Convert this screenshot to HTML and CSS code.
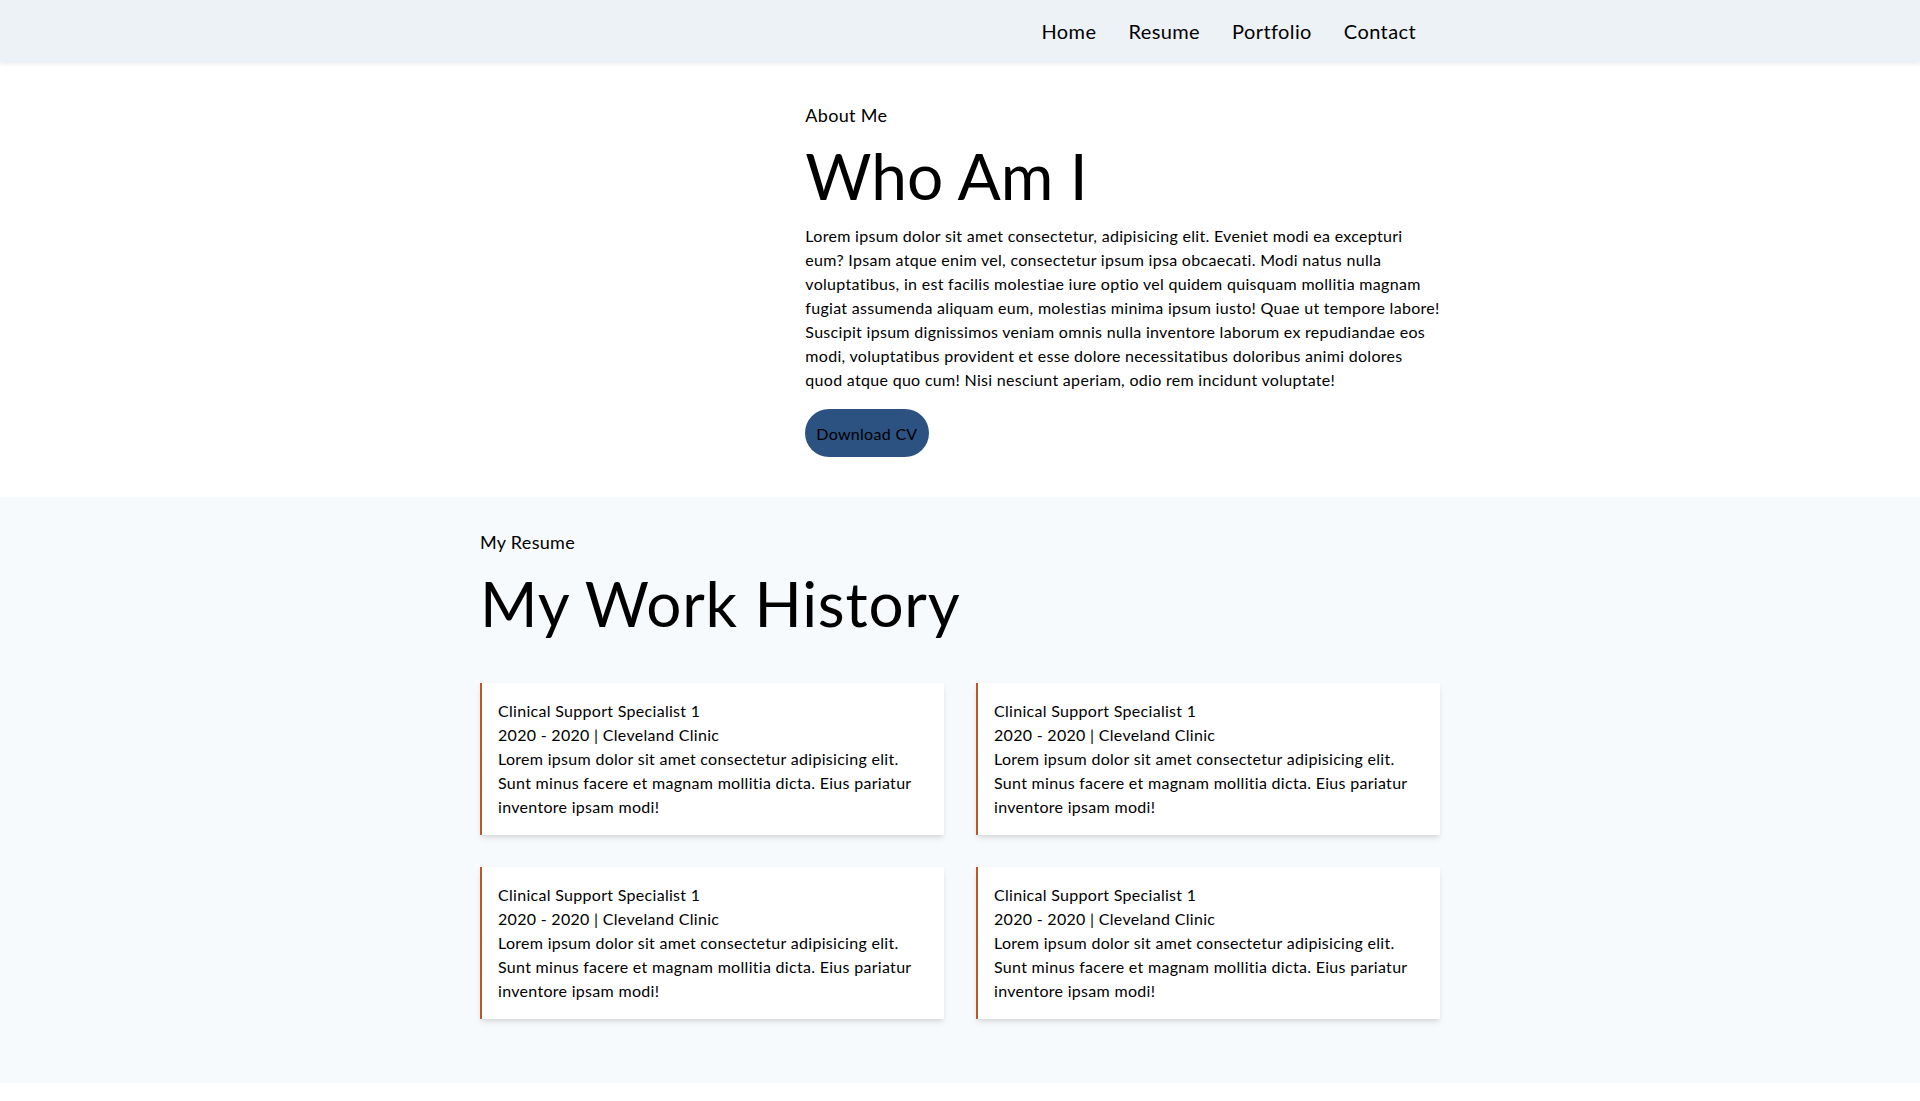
FILE: index.html
```html
<!DOCTYPE html>
<html lang="en">
<head>
<meta charset="utf-8">
<title>Portfolio</title>
<link rel="stylesheet" href="styles.css">
</head>
<body>
<header class="navbar">
  <nav class="container nav-inner">
    <a class="nav-link" href="#">Home</a>
    <a class="nav-link" href="#">Resume</a>
    <a class="nav-link" href="#">Portfolio</a>
    <a class="nav-link" href="#">Contact</a>
  </nav>
</header>

<section class="about">
  <div class="container about-grid">
    <div class="about-photo"></div>
    <div class="about-text">
      <p class="eyebrow">About Me</p>
      <h1 class="title title-about">Who Am I</h1>
      <p class="about-body">Lorem ipsum dolor sit amet consectetur, adipisicing elit. Eveniet modi ea excepturi eum? Ipsam atque enim vel, consectetur ipsum ipsa obcaecati. Modi natus nulla voluptatibus, in est facilis molestiae iure optio vel quidem quisquam mollitia magnam fugiat assumenda aliquam eum, molestias minima ipsum iusto! Quae ut tempore labore! Suscipit ipsum dignissimos veniam omnis nulla inventore laborum ex repudiandae eos modi, voluptatibus provident et esse dolore necessitatibus doloribus animi dolores quod atque quo cum! Nisi nesciunt aperiam, odio rem incidunt voluptate!</p>
      <button class="btn">Download CV</button>
    </div>
  </div>
</section>

<section class="resume">
  <div class="container">
    <p class="eyebrow eyebrow-resume">My Resume</p>
    <h2 class="title title-resume">My Work History</h2>
    <div class="jobs">
      <div class="job">
        <p>Clinical Support Specialist 1</p>
        <p>2020 - 2020 | Cleveland Clinic</p>
        <p>Lorem ipsum dolor sit amet consectetur adipisicing elit. Sunt minus facere et magnam mollitia dicta. Eius pariatur inventore ipsam modi!</p>
      </div>
      <div class="job">
        <p>Clinical Support Specialist 1</p>
        <p>2020 - 2020 | Cleveland Clinic</p>
        <p>Lorem ipsum dolor sit amet consectetur adipisicing elit. Sunt minus facere et magnam mollitia dicta. Eius pariatur inventore ipsam modi!</p>
      </div>
      <div class="job">
        <p>Clinical Support Specialist 1</p>
        <p>2020 - 2020 | Cleveland Clinic</p>
        <p>Lorem ipsum dolor sit amet consectetur adipisicing elit. Sunt minus facere et magnam mollitia dicta. Eius pariatur inventore ipsam modi!</p>
      </div>
      <div class="job">
        <p>Clinical Support Specialist 1</p>
        <p>2020 - 2020 | Cleveland Clinic</p>
        <p>Lorem ipsum dolor sit amet consectetur adipisicing elit. Sunt minus facere et magnam mollitia dicta. Eius pariatur inventore ipsam modi!</p>
      </div>
    </div>
  </div>
</section>
</body>
</html>
```

FILE: styles.css
```css
* {
  box-sizing: border-box;
}

html, body {
  margin: 0;
  padding: 0;
}

body {
  font-family: "Lato", "Open Sans", sans-serif;
  font-size: 16px;
  line-height: 24px;
  letter-spacing: 0.3px;
  color: #000;
  background: #fff;
}

p, h1, h2 {
  margin: 0;
}

.container {
  width: 960px;
  margin: 0 auto;
}

.navbar {
  height: 62px;
  background: #edf2f7;
  box-shadow: 0 2px 4px rgba(0, 0, 0, 0.08);
  position: relative;
  z-index: 1;
}

.nav-inner {
  height: 100%;
  display: flex;
  justify-content: flex-end;
  align-items: center;
  gap: 32px;
  padding-right: 24px;
}

.nav-link {
  color: #000;
  text-decoration: none;
  font-size: 20px;
  line-height: 30px;
  letter-spacing: 0.4px;
}

.about {
  padding: 40px 0 40px;
}

.about-grid {
  display: grid;
  grid-template-columns: 1fr 2fr;
  column-gap: 8px;
}

.eyebrow {
  font-size: 18px;
  line-height: 27px;
}

.title {
  font-weight: 400;
}

.title-about {
  font-size: 64px;
  line-height: 80px;
  letter-spacing: 0;
  margin-top: 7px;
}

.about-body {
  margin-top: 8px;
}

.btn {
  display: block;
  margin-top: 17px;
  height: 48px;
  padding: 0 11px;
  border: none;
  border-radius: 24px;
  background: #2c5282;
  color: #000;
  font-family: inherit;
  font-size: 16px;
  letter-spacing: 0.3px;
}

.resume {
  background: #f7fafc;
  padding: 32px 0 64px;
}

.title-resume {
  font-size: 62px;
  line-height: 76px;
  letter-spacing: 0.8px;
  margin-top: 9px;
}

.jobs {
  margin-top: 42px;
  display: grid;
  grid-template-columns: 1fr 1fr;
  gap: 32px;
}

.job {
  background: #fff;
  border-left: 2px solid #c05621;
  padding: 16px;
  box-shadow: 0 4px 6px -1px rgba(0, 0, 0, 0.1), 0 2px 4px -1px rgba(0, 0, 0, 0.06);
}
```
